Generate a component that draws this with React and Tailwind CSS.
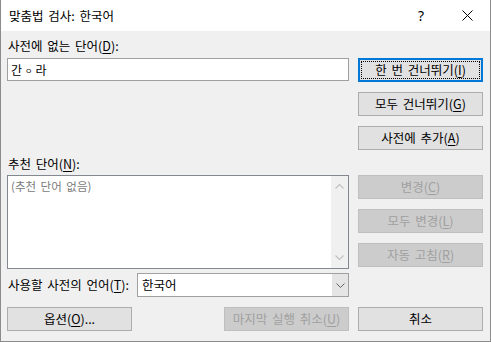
import React from "react";

const KR = "font-['Noto_Sans_CJK_KR',sans-serif]";

function Lbl({ k, m, tail = "" }) {
  return (
    <>
      <span className="[word-spacing:2px]">{k}</span>
      <span>
        (<span className="underline underline-offset-[2px] decoration-[1px]">{m}</span>){tail}
      </span>
    </>
  );
}

function Btn({ children, disabled = false, focused = false }) {
  if (focused) {
    return (
      <div className="relative h-[24px] w-full border-2 border-[#0078d7] bg-[#e1e1e1] flex items-center justify-center text-black">
        <div className="absolute inset-[1px] border border-dotted border-black" />
        <span className="relative">{children}</span>
      </div>
    );
  }
  if (disabled) {
    return (
      <div className="h-[24px] w-full border border-[#bfbfbf] bg-[#cccccc] flex items-center justify-center text-[#a0a0a0]">
        {children}
      </div>
    );
  }
  return (
    <div className="h-[24px] w-full border border-[#adadad] bg-[#e1e1e1] flex items-center justify-center text-black">
      {children}
    </div>
  );
}

export default function App() {
  return (
    <div
      className={`w-[491px] h-[342px] bg-[#f0f0f0] border-x border-b border-[#8c8c8c] flex flex-col overflow-hidden text-[12.5px] leading-[16px] text-black ${KR}`}
    >
      {/* Title bar */}
      <div className="h-[31px] shrink-0 bg-white flex items-center">
        <div className="flex-1 pl-[8px] text-[12.5px] [word-spacing:2px]">맞춤법 검사: 한국어</div>
        <div className="w-[46px] h-full flex items-center justify-center text-[14px] font-['Noto_Sans',sans-serif]">
          ?
        </div>
        <div className="w-[46px] h-full flex items-center justify-center">
          <svg width="11" height="11" viewBox="0 0 11 11">
            <path d="M0.5 0.5 L10.5 10.5 M10.5 0.5 L0.5 10.5" stroke="#000" strokeWidth="1" />
          </svg>
        </div>
      </div>

      {/* Body */}
      <div className="flex flex-col pl-[6px] pr-[7px] pt-[7px]">
        {/* Row A */}
        <div className="flex gap-[9px]">
          <div className="w-[342px] flex flex-col">
            <div className="h-[16px] leading-[16px] pl-[1px] whitespace-nowrap">
              <Lbl k="사전에 없는 단어" m="D" tail=":" />
            </div>
            <div className="mt-[4px] h-[23px] bg-white border border-[#a0a0a0] flex items-center pl-[3px] text-[12px]">
              <span>간</span>
              <span className="text-[8px] mx-[3px] relative top-[1px]">ㅇ</span>
              <span>라</span>
            </div>
          </div>
          <div className="w-[125px] flex flex-col gap-[10px] pt-[20px]">
            <Btn focused>
              <Lbl k="한 번 건너뛰기" m="I" />
            </Btn>
            <Btn>
              <Lbl k="모두 건너뛰기" m="G" />
            </Btn>
            <Btn>
              <Lbl k="사전에 추가" m="A" />
            </Btn>
          </div>
        </div>

        {/* Row B */}
        <div className="flex gap-[9px]">
          <div className="w-[342px] flex flex-col">
            <div className="mt-[6px] h-[16px] leading-[16px] pl-[1px]">
              <Lbl k="추천 단어" m="N" tail=":" />
            </div>
            <div className="mt-[3px] h-[94px] bg-white border border-[#828790] flex">
              <div className="flex-1 pl-[3px] pt-[2px] text-[#7a7a7a] text-[11.5px] leading-[16px]">
                <span className="[word-spacing:2px]">(추천 단어 없음)</span>
              </div>
              <div className="w-[17px] bg-[#f0f0f0] flex flex-col justify-between items-center pt-[8px] pb-[8px]">
                <svg width="9" height="5" viewBox="0 0 9 5">
                  <path d="M0.5 4.5 L4.5 0.5 L8.5 4.5" fill="none" stroke="#c2c2c2" strokeWidth="1.2" />
                </svg>
                <svg width="9" height="5" viewBox="0 0 9 5">
                  <path d="M0.5 0.5 L4.5 4.5 L8.5 0.5" fill="none" stroke="#c2c2c2" strokeWidth="1.2" />
                </svg>
              </div>
            </div>
          </div>
          <div className="w-[125px] flex flex-col gap-[10px] pt-[25px]">
            <Btn disabled>
              <Lbl k="변경" m="C" />
            </Btn>
            <Btn disabled>
              <Lbl k="모두 변경" m="L" />
            </Btn>
            <Btn disabled>
              <Lbl k="자동 고침" m="R" />
            </Btn>
          </div>
        </div>

        {/* Row C: language combo */}
        <div className="mt-[4px] flex items-center w-[342px] h-[24px]">
          <div className="w-[130px] pl-[1px] whitespace-nowrap">
            <Lbl k="사용할 사전의 언어" m="T" tail=":" />
          </div>
          <div className="flex-1 h-full bg-white border border-[#a0a0a0] flex">
            <div className="flex-1 flex items-center pl-[4px] text-[12.5px]">한국어</div>
            <div className="w-[16px] bg-[#e5e5e5] flex items-center justify-center">
              <svg width="9" height="5" viewBox="0 0 9 5">
                <path d="M0.5 0.5 L4.5 4.5 L8.5 0.5" fill="none" stroke="#606060" strokeWidth="1" />
              </svg>
            </div>
          </div>
        </div>

        {/* Row D: bottom buttons */}
        <div className="mt-[10px] flex gap-[9px]">
          <div className="w-[342px] flex justify-between">
            <div className="w-[125px]">
              <Btn>
                <Lbl k="옵션" m="O" tail="..." />
              </Btn>
            </div>
            <div className="w-[125px]">
              <Btn disabled>
                <Lbl k="마지막 실행 취소" m="U" />
              </Btn>
            </div>
          </div>
          <div className="w-[125px]">
            <Btn>
              <span>취소</span>
            </Btn>
          </div>
        </div>
      </div>
    </div>
  );
}
